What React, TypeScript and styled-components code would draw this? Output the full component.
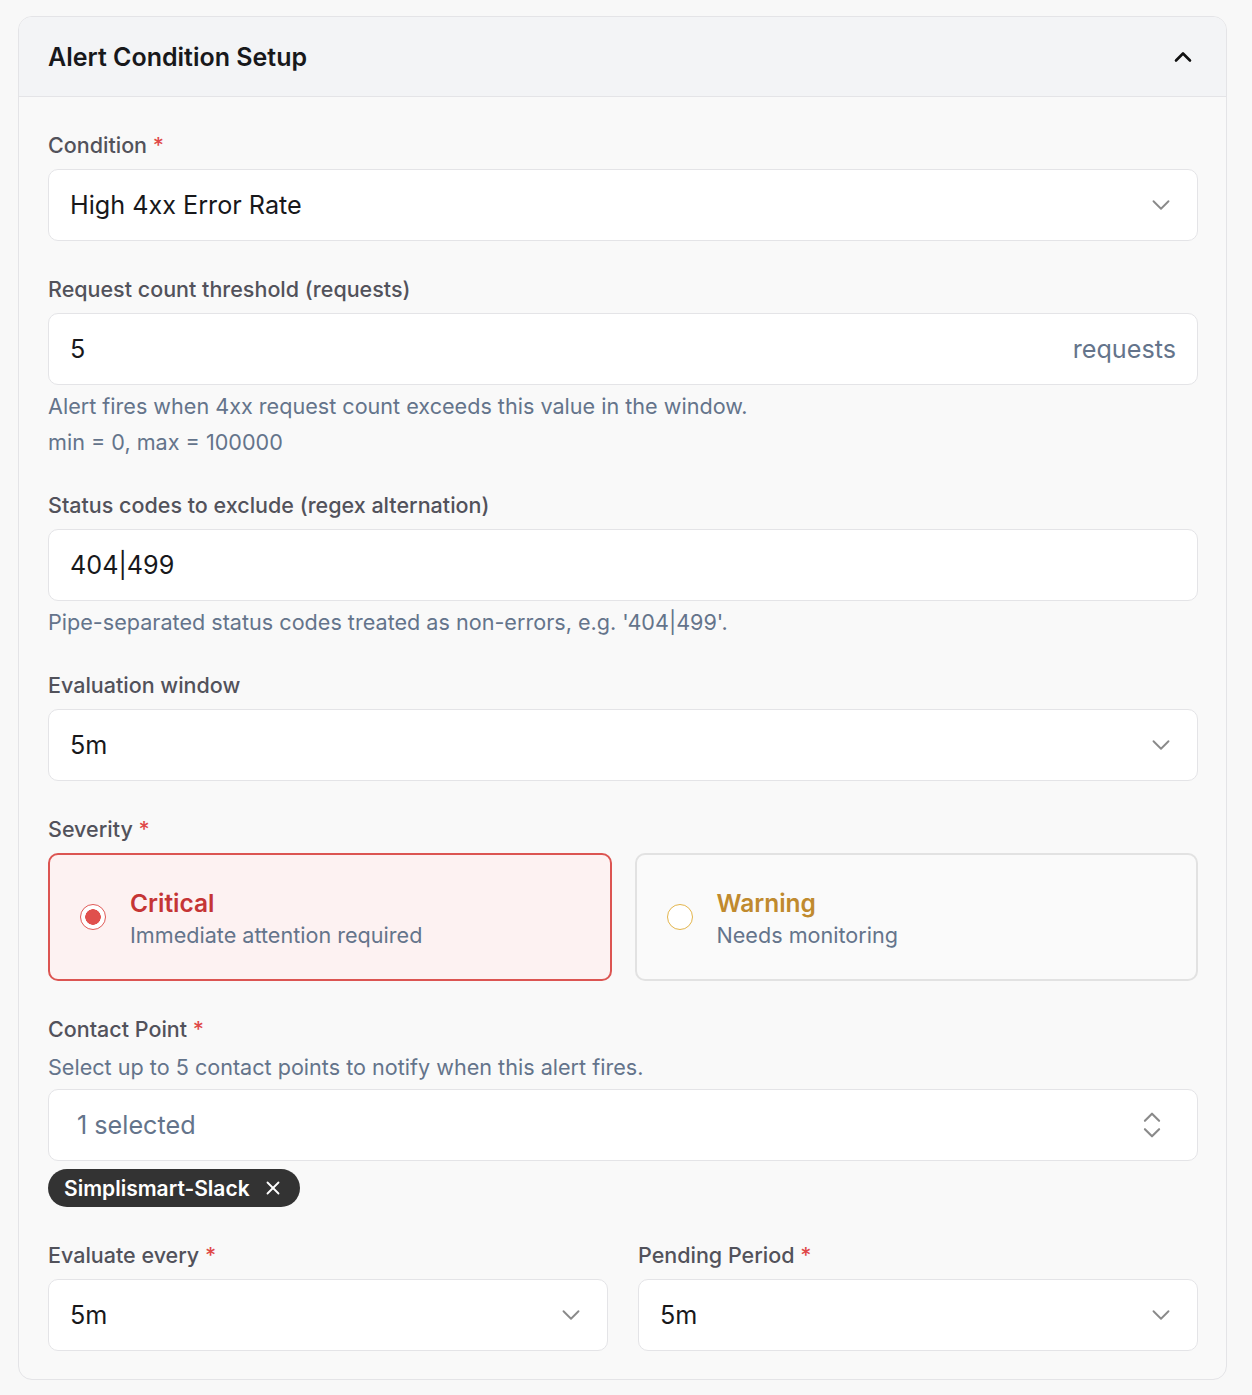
import styled, { createGlobalStyle } from "styled-components";
import { ChevronDown, ChevronUp, ChevronsUpDown, X } from "lucide-react";

const GlobalStyle = createGlobalStyle`
    * { box-sizing: border-box; }
    body {
        margin: 0;
        background: #f8f8f8;
        font-family: Inter, "Noto Sans", sans-serif;
        color: #18181b;
    }
`;

type Level = "critical" | "warning";

const SEVERITIES: { key: Level; title: string; desc: string }[] = [
    { key: "critical", title: "Critical", desc: "Immediate attention required" },
    { key: "warning", title: "Warning", desc: "Needs monitoring" },
];

function Select({ value }: { value: string }) {
    return (
        <SBox>
            <SValue>{value}</SValue>
            <ChevronDown size={30} strokeWidth={1.5} color="#8a8a8a" />
        </SBox>
    );
}

export default function App() {
    const selected: Level = "critical";

    return (
        <SPage>
            <GlobalStyle />
            <SCard>
                <SHeader>
                    <STitle>Alert Condition Setup</STitle>
                    <ChevronUp size={28} strokeWidth={2.25} color="#111" />
                </SHeader>
                <SBody>
                    <SField>
                        <SLabel>
                            Condition <SReq>*</SReq>
                        </SLabel>
                        <Select value="High 4xx Error Rate" />
                    </SField>

                    <SField>
                        <SLabel>Request count threshold (requests)</SLabel>
                        <SBox>
                            <SValue>5</SValue>
                            <SSuffix>requests</SSuffix>
                        </SBox>
                        <SHelp>
                            <p>Alert fires when 4xx request count exceeds this value in the window.</p>
                            <p>min = 0, max = 100000</p>
                        </SHelp>
                    </SField>

                    <SField>
                        <SLabel>Status codes to exclude (regex alternation)</SLabel>
                        <SBox>
                            <SValue>404|499</SValue>
                        </SBox>
                        <SHelp>
                            <p>Pipe-separated status codes treated as non-errors, e.g. '404|499'.</p>
                        </SHelp>
                    </SField>

                    <SField>
                        <SLabel>Evaluation window</SLabel>
                        <Select value="5m" />
                    </SField>

                    <SField>
                        <SLabel>
                            Severity <SReq>*</SReq>
                        </SLabel>
                        <SSeverityGrid>
                            {SEVERITIES.map((s) => (
                                <SSeverity key={s.key} $level={s.key} $active={s.key === selected}>
                                    <SRadio $level={s.key} $active={s.key === selected} />
                                    <div>
                                        <SSevTitle $level={s.key}>{s.title}</SSevTitle>
                                        <SSevDesc>{s.desc}</SSevDesc>
                                    </div>
                                </SSeverity>
                            ))}
                        </SSeverityGrid>
                    </SField>

                    <SField>
                        <SLabel>
                            Contact Point <SReq>*</SReq>
                        </SLabel>
                        <SSubLabel>Select up to 5 contact points to notify when this alert fires.</SSubLabel>
                        <SBox $wide>
                            <SPlaceholder>1 selected</SPlaceholder>
                            <ChevronsUpDown size={34} strokeWidth={1.5} color="#8a8a8a" />
                        </SBox>
                        <SChips>
                            <SChip>
                                Simplismart-Slack
                                <X size={22} strokeWidth={2} />
                            </SChip>
                        </SChips>
                    </SField>

                    <SRow>
                        <SField>
                            <SLabel>
                                Evaluate every <SReq>*</SReq>
                            </SLabel>
                            <Select value="5m" />
                        </SField>
                        <SField>
                            <SLabel>
                                Pending Period <SReq>*</SReq>
                            </SLabel>
                            <Select value="5m" />
                        </SField>
                    </SRow>
                </SBody>
            </SCard>
        </SPage>
    );
}

const SPage = styled.div`
    padding: 16px 25px 15px 18px;
`;

const SCard = styled.section`
    background: #f9f9f9;
    border: 1px solid #e4e4e7;
    border-radius: 14px;
    overflow: hidden;
`;

const SHeader = styled.div`
    height: 80px;
    display: flex;
    align-items: center;
    justify-content: space-between;
    padding: 0 29px 0 29px;
    background: #f3f4f6;
    border-bottom: 1px solid #e4e4e7;
`;

const STitle = styled.h2`
    margin: 0;
    font-size: 25px;
    font-weight: 600;
    color: #18181b;
`;

const SBody = styled.div`
    display: flex;
    flex-direction: column;
    gap: 36px;
    padding: 36px 28px 28px 29px;
`;

const SField = styled.div`
    display: flex;
    flex-direction: column;
    min-width: 0;
`;

const SLabel = styled.label`
    font-size: 21.5px;
    line-height: 24px;
    font-weight: 500;
    color: #52525b;
    margin-bottom: 12px;
`;

const SReq = styled.span`
    color: #e04848;
`;

const SBox = styled.div<{ $wide?: boolean }>`
    height: 72px;
    display: flex;
    align-items: center;
    justify-content: space-between;
    gap: 12px;
    padding: 0 ${({ $wide }) => ($wide ? "28px 0 28px" : "21px 0 21px")};
    background: #fff;
    border: 1px solid #e4e4e7;
    border-radius: 10px;
`;

const SValue = styled.span`
    font-size: 25.2px;
    color: #18181b;
`;

const SSuffix = styled.span`
    font-size: 25.2px;
    color: #64748b;
`;

const SPlaceholder = styled.span`
    font-size: 25.2px;
    color: #64748b;
`;

const SHelp = styled.div`
    display: flex;
    flex-direction: column;
    gap: 6px;
    margin-top: 6px;

    p {
        margin: 0;
        font-size: 21.6px;
        line-height: 30px;
        color: #64748b;
    }
`;

const SSubLabel = styled.p`
    margin: -1px 0 7px;
    font-size: 21.6px;
    line-height: 30px;
    color: #64748b;
`;

const SSeverityGrid = styled.div`
    display: grid;
    grid-template-columns: 1fr 1fr;
    gap: 23px;
`;

const SSeverity = styled.div<{ $level: Level; $active: boolean }>`
    height: 128px;
    display: flex;
    align-items: center;
    gap: 24px;
    padding: 3px 30px 0;
    border-radius: 10px;
    border: 2px solid ${({ $active }) => ($active ? "#dc5552" : "#e2e2e2")};
    background: ${({ $active }) => ($active ? "#fdf2f2" : "#fafafa")};

    & > span {
        margin-top: -3px;
    }
`;

const SRadio = styled.span<{ $level: Level; $active: boolean }>`
    width: 26px;
    height: 26px;
    flex-shrink: 0;
    border-radius: 50%;
    border: 1px solid ${({ $level }) => ($level === "critical" ? "#e05a57" : "#e3b54c")};
    background: ${({ $active }) => ($active ? "radial-gradient(circle, #e0504d 0 7.5px, #fff 8px)" : "#fff")};
`;

const SSevTitle = styled.div<{ $level: Level }>`
    font-size: 24.5px;
    line-height: 32px;
    font-weight: 600;
    color: ${({ $level }) => ($level === "critical" ? "#c53535" : "#c08a2e")};
`;

const SSevDesc = styled.div`
    font-size: 21.6px;
    line-height: 32px;
    color: #64748b;
`;

const SChips = styled.div`
    display: flex;
    gap: 8px;
    margin-top: 8px;
`;

const SChip = styled.span`
    height: 38px;
    display: inline-flex;
    align-items: center;
    gap: 12px;
    padding: 0 16px;
    border-radius: 19px;
    background: #333333;
    color: #fff;
    font-size: 21px;
    font-weight: 600;
`;

const SRow = styled.div`
    display: grid;
    grid-template-columns: 1fr 1fr;
    gap: 30px;
`;
